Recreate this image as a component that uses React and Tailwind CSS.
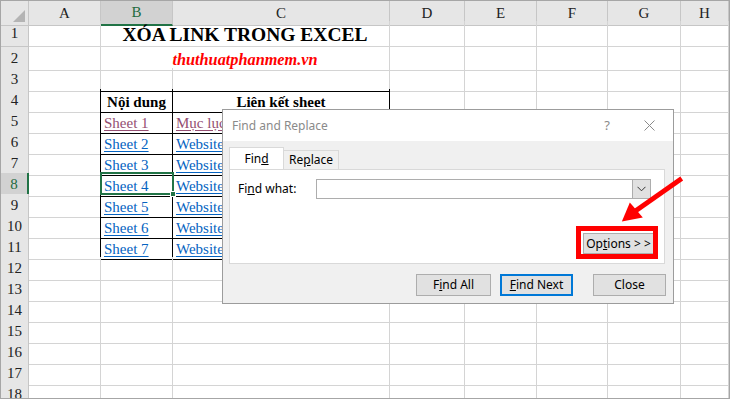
import React from 'react';

const COLS = ['A', 'B', 'C', 'D', 'E', 'F', 'G', 'H'];
const ROW_HEIGHTS = { 1: 'h-[26px]' };
const ROWS = Array.from({ length: 18 }, (_, i) => i + 1);
const GRID = 'grid grid-cols-[28px_72px_72px_217px_75px_72px_71px_73px_48px]';

const serif = { fontFamily: '"Liberation Serif", "Times New Roman", serif' };
const ui = { fontFamily: '"Noto Sans", "Segoe UI", sans-serif' };

const links = {
  5: ['Sheet 1', 'Mục lục', true],
  6: ['Sheet 2', 'Website'],
  7: ['Sheet 3', 'Website'],
  8: ['Sheet 4', 'Website'],
  9: ['Sheet 5', 'Website'],
  10: ['Sheet 6', 'Website'],
  11: ['Sheet 7', 'Website'],
};

const inTable = (r, c) => r >= 4 && r <= 11 && (c === 'B' || c === 'C');

const cellBorder = (r, c) => {
  const right = inTable(r, c) || (c === 'A' && r >= 4 && r <= 11) ? 'border-r-black' : 'border-r-[#d4d4d4]';
  const bottom = inTable(r, c) || (r === 3 && (c === 'B' || c === 'C')) ? 'border-b-black' : 'border-b-[#d4d4d4]';
  return `border-r border-b ${right} ${bottom}`;
};

const Cell = ({ r, c }) => {
  let content = null;
  if (r === 4 && c === 'B') content = <span className="w-full text-center font-bold">Nội dung</span>;
  if (r === 4 && c === 'C') content = <span className="w-full text-center font-bold">Liên kết sheet</span>;
  if (links[r] && (c === 'B' || c === 'C')) {
    const [b, cc, visited] = links[r];
    content = (
      <span className={`pl-[3px] underline underline-offset-2 ${visited ? 'text-[#954f72]' : 'text-[#0563c1]'}`}>
        {c === 'B' ? b : cc}
      </span>
    );
  }
  return (
    <div className={`flex items-end pb-[1px] text-[15px] leading-[18px] ${cellBorder(r, c)}`}>{content}</div>
  );
};

const RowHeader = ({ r }) => (
  <div
    className={`flex items-center justify-center text-[15px] border-b border-r border-[#c6c6c6] ${
      r === 8 ? 'bg-[#d2d2d2] text-[#1e6b3f] border-r-2 border-r-[#217346]' : 'bg-[#e6e6e6] text-[#222]'
    }`}
  >
    {r}
  </div>
);

const SheetRow = ({ r }) => {
  const h = ROW_HEIGHTS[r] || 'h-[21px]';
  if (r === 1 || r === 2) {
    return (
      <div className={`${GRID} ${h}`}>
        <RowHeader r={r} />
        <div className={cellBorder(r, 'A')} />
        <div className="col-span-2 flex items-end justify-center border-b border-r border-[#d4d4d4]">
          {r === 1 ? (
            <span className="text-[19.5px] font-bold leading-[23px] text-black">XÓA LINK TRONG EXCEL</span>
          ) : (
            <span className="text-[16.3px] font-bold italic leading-[20px] text-[#ff0000]">thuthuatphanmem.vn</span>
          )}
        </div>
        {['D', 'E', 'F', 'G', 'H'].map((c) => (
          <div key={c} className={cellBorder(r, c)} />
        ))}
      </div>
    );
  }
  return (
    <div className={`${GRID} ${h}`}>
      <RowHeader r={r} />
      {COLS.map((c) => (
        <Cell key={c} r={r} c={c} />
      ))}
    </div>
  );
};

const Button = ({ children, className = '', border = 'border border-[#adadad]' }) => (
  <div className={`flex items-center justify-center bg-[#e1e1e1] text-[12px] text-black ${border} ${className}`}>
    {children}
  </div>
);

const Dialog = () => (
  <div
    className="absolute left-[221px] top-[108px] w-[452px] h-[195px] border border-[#9c9c9c] bg-[#f0f0f0] flex flex-col"
    style={ui}
  >
    <div className="h-[31px] bg-white flex items-center pl-[9px] pr-[14px]">
      <span className="text-[12px] text-[#8a8a8a] flex-1">Find and Replace</span>
      <span className="text-[13px] text-[#8a8a8a] mr-[34px]">?</span>
      <svg width="11" height="11" viewBox="0 0 11 11" className="mr-[4px]">
        <path d="M0.5 0.5L10.5 10.5M10.5 0.5L0.5 10.5" stroke="#8a8a8a" strokeWidth="1" />
      </svg>
    </div>
    <div className="px-[6px] pt-[7px] flex flex-col">
      <div className="flex items-end h-[21px]">
        <div className="relative z-10 w-[55px] h-[22px] bg-white border border-b-0 border-[#d9d9d9] flex items-center justify-center text-[12px] text-black">
          Fin<span className="underline">d</span>
        </div>
        <div className="w-[55px] h-[19px] bg-[#f0f0f0] border border-l-0 border-b-0 border-[#d9d9d9] flex items-center justify-center text-[12px] text-black">
          Re<span className="underline">p</span>lace
        </div>
      </div>
      <div className="w-[436px] h-[95px] bg-white border border-[#d9d9d9] flex flex-col px-[8px] pt-[9px]">
        <div className="flex items-center h-[20px]">
          <span className="w-[78px] text-[12px] text-black">
            Fi<span className="underline">n</span>d what:
          </span>
          <div className="flex-1 h-[20px] border border-[#adadad] flex justify-end mr-[5px]">
            <div className="w-[18px] h-full bg-[#e1e1e1] border-l border-[#adadad] flex items-center justify-center">
              <svg width="9" height="6" viewBox="0 0 9 6">
                <path d="M0.5 0.8L4.5 4.8L8.5 0.8" stroke="#333" strokeWidth="1" fill="none" />
              </svg>
            </div>
          </div>
        </div>
        <div className="flex justify-end mt-[34px] pr-[1px]">
          <Button className="w-[71px] h-[21px] mr-[1px] text-[11.5px]">
            Op<span className="underline">t</span>ions &gt; &gt;
          </Button>
        </div>
      </div>
      <div className="flex justify-end gap-[9px] mt-[10px] pr-[1px]">
        <Button className="w-[75px] h-[22px]">
          F<span className="underline">i</span>nd All
        </Button>
        <Button className="w-[73px] h-[22px]" border="border-2 border-[#0078d7]">
          <span className="underline">F</span>ind Next
        </Button>
        <Button className="w-[73px] h-[22px] ml-[11px]">Close</Button>
      </div>
    </div>
  </div>
);

export default function App() {
  return (
    <div className="relative w-[730px] h-[399px] overflow-hidden bg-white border border-[#a6a6a6]" style={serif}>
      <div className={`${GRID} h-[20px]`}>
        <div className="relative bg-[#e6e6e6] border-r border-b border-[#c6c6c6]">
          <svg width="12" height="12" viewBox="0 0 12 12" className="absolute right-[3px] bottom-[3px]">
            <polygon points="12,0 12,12 0,12" fill="#b4b4b4" />
          </svg>
        </div>
        {COLS.map((c) => (
          <div
            key={c}
            className={`flex items-center justify-center text-[15px] border-r border-[#c6c6c6] ${
              c === 'B'
                ? 'bg-[#d2d2d2] text-[#1e6b3f] border-b-2 border-b-[#217346]'
                : 'bg-[#e6e6e6] text-[#222] border-b border-b-[#c6c6c6]'
            }`}
          >
            {c}
          </div>
        ))}
      </div>
      {ROWS.map((r) => (
        <SheetRow key={r} r={r} />
      ))}

      {/* selected cell B8 */}
      <div className="absolute left-[99px] top-[171px] w-[74px] h-[23px] border-2 border-[#217346]" />
      <div className="absolute left-[169px] top-[190px] w-[6px] h-[6px] bg-[#217346] border border-white" />

      <Dialog />

      {/* annotation */}
      <div className="absolute left-[575px] top-[225px] w-[82px] h-[33px] border-[5px] border-[#ff0000]" />
      <svg className="absolute left-0 top-0" width="730" height="399" viewBox="0 0 731 400">
        <line x1="682" y1="178" x2="632" y2="213" stroke="#ff0000" strokeWidth="5" />
        <polygon points="622,221 630,202 643,217" fill="#ff0000" />
      </svg>
    </div>
  );
}
